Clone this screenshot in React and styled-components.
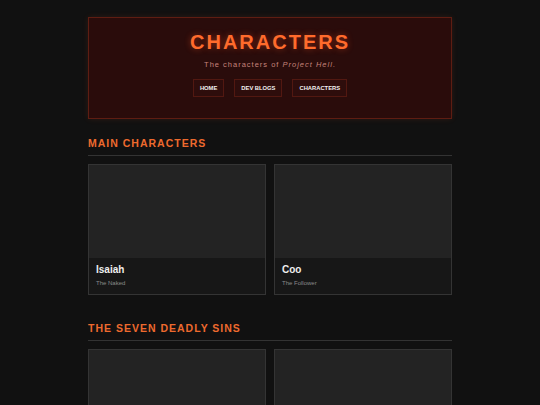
import styled, { createGlobalStyle } from "styled-components";

const Global = createGlobalStyle`
  body {
    margin: 0;
    background: #111111;
    font-family: "Liberation Sans", Arial, sans-serif;
    color: #eee;
  }
`;

const Page = styled.main`
  width: 364px;
  margin: 17px auto 0;
`;

const Header = styled.header`
  background: #2a0c0b;
  border: 1px solid #5e1d12;
  box-shadow: 0 0 6px rgba(255, 90, 40, 0.12);
  padding: 12px 0 21px;
  text-align: center;
`;

const Title = styled.h1`
  margin: 0;
  font-size: 20px;
  line-height: 24px;
  font-weight: bold;
  letter-spacing: 2px;
  color: #ff6b2c;
  text-shadow: 0 0 6px rgba(255, 80, 30, 0.45);
`;

const Subtitle = styled.p`
  margin: 6px 0 0;
  font-size: 7.5px;
  line-height: 10px;
  letter-spacing: 1px;
  color: #c5837a;

  em {
    font-style: italic;
  }
`;

const Nav = styled.nav`
  display: flex;
  justify-content: center;
  gap: 10px;
  margin-top: 9px;
`;

const NavButton = styled.a`
  display: flex;
  align-items: center;
  height: 16px;
  padding: 0 6px;
  border: 1px solid #521811;
  background: #2e0d0c;
  color: #f2f2f2;
  font-size: 5.8px;
  font-weight: bold;
  text-decoration: none;
`;

const Section = styled.section`
  margin-top: ${(p) => p.$top}px;
`;

const Heading = styled.h2`
  margin: 0;
  padding-bottom: 6px;
  border-bottom: 1px solid #333;
  font-size: 10.5px;
  line-height: 12px;
  font-weight: bold;
  letter-spacing: 1px;
  color: #ee6a2e;
`;

const Grid = styled.div`
  display: grid;
  grid-template-columns: 1fr 1fr;
  gap: 8px;
  margin-top: 8px;
`;

const Card = styled.article`
  border: 1px solid #343434;
  background: #171717;
`;

const Portrait = styled.div`
  height: 93px;
  background: #232323;
`;

const Info = styled.div`
  padding: 6px 7px 7px;
`;

const Name = styled.div`
  font-size: 10px;
  line-height: 12px;
  font-weight: bold;
  color: #eeeeee;
`;

const Role = styled.div`
  margin-top: 3px;
  font-size: 6px;
  line-height: 8px;
  color: #8a8a8a;
`;

const main = [
  { name: "Isaiah", role: "The Naked" },
  { name: "Coo", role: "The Follower" },
];

const sins = [
  { name: "Pride", role: "" },
  { name: "Greed", role: "" },
];

export default function App() {
  return (
    <>
      <Global />
      <Page>
        <Header>
          <Title>CHARACTERS</Title>
          <Subtitle>
            The characters of <em>Project Hell</em>.
          </Subtitle>
          <Nav>
            <NavButton href="#">HOME</NavButton>
            <NavButton href="#">DEV BLOGS</NavButton>
            <NavButton href="#">CHARACTERS</NavButton>
          </Nav>
        </Header>

        <Section $top={18}>
          <Heading>MAIN CHARACTERS</Heading>
          <Grid>
            {main.map((c) => (
              <Card key={c.name}>
                <Portrait />
                <Info>
                  <Name>{c.name}</Name>
                  <Role>{c.role}</Role>
                </Info>
              </Card>
            ))}
          </Grid>
        </Section>

        <Section $top={27}>
          <Heading>THE SEVEN DEADLY SINS</Heading>
          <Grid>
            {sins.map((c) => (
              <Card key={c.name}>
                <Portrait />
                <Info>
                  <Name>{c.name}</Name>
                  <Role>{c.role}</Role>
                </Info>
              </Card>
            ))}
          </Grid>
        </Section>
      </Page>
    </>
  );
}
